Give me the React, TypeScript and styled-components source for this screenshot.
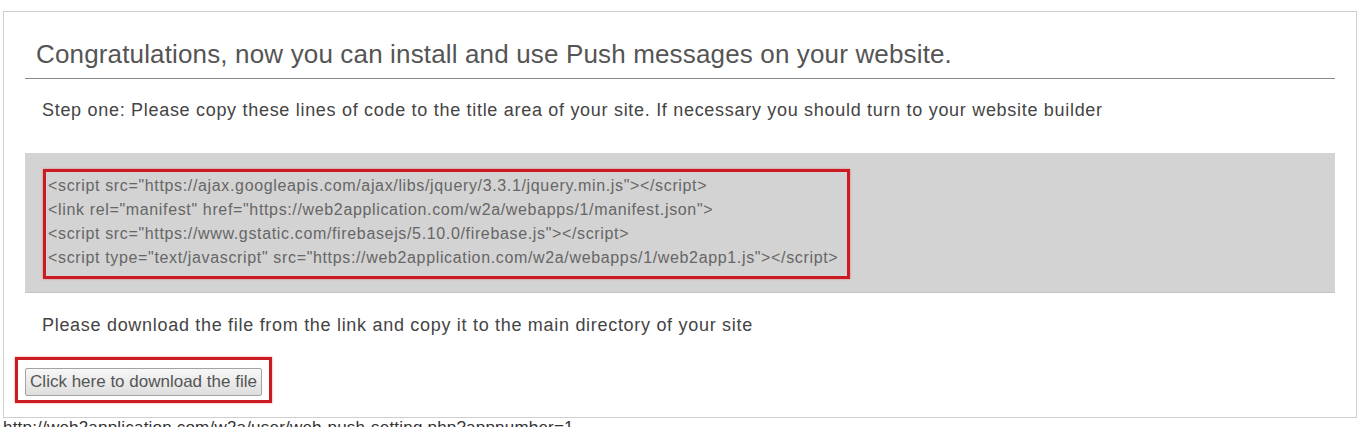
import styled, { createGlobalStyle } from 'styled-components';

const GlobalStyle = createGlobalStyle`
  html, body {
    margin: 0;
    padding: 0;
    background: #fff;
    overflow: hidden;
  }
  body {
    font-family: "Liberation Sans", Arial, sans-serif;
  }
`;

const Page = styled.div`
  padding: 11px 0 0 3px;
  width: 1366px;
  height: 427px;
  box-sizing: border-box;
`;

const Panel = styled.div`
  width: 1354px;
  box-sizing: border-box;
  border: 1px solid #cfcfcf;
  background: #fff;
  padding: 27px 0 14px;
`;

const Header = styled.div`
  margin: 0 21px;
  padding: 0 0 9px 11px;
  border-bottom: 1px solid #8a8a8a;
`;

const Title = styled.h1`
  margin: 0;
  font-size: 26px;
  letter-spacing: 0.15px;
  line-height: 30px;
  font-weight: normal;
  color: #555;
`;

const Note = styled.p<{ $top: number }>`
  margin: ${(p) => p.$top}px 0 0;
  padding-left: 38px;
  font-size: 18px;
  letter-spacing: 0.7px;
  line-height: 20px;
  color: #444;
  white-space: nowrap;
`;

const CodeArea = styled.div`
  margin: 33px 21px 0;
  padding: 16px 18px 13px;
  background: #d3d3d3;
  border-bottom: 1px solid #c4c4c4;
`;

const Highlight = styled.div`
  border: 3px solid #cc1a22;
  box-shadow: 0 0 2px rgba(230, 60, 60, 0.6);
`;

const CodeFrame = styled(Highlight)`
  width: 807px;
  box-sizing: border-box;
  padding: 2px 2px 6px;
`;

const CodeLines = styled.div`
  font-size: 16px;
  letter-spacing: 0.65px;
  line-height: 24px;
  color: #666;
  white-space: nowrap;
`;

const ButtonFrame = styled(Highlight)`
  display: inline-block;
  margin: 22px 0 0 11px;
  padding: 8px 7px 4px;
`;

const DownloadButton = styled.button`
  display: block;
  height: 28px;
  width: 237px;
  padding: 0;
  border: 1px solid #a3a3a3;
  border-radius: 2px;
  background: linear-gradient(#f7f7f7, #dedede);
  font-family: "Liberation Sans", Arial, sans-serif;
  font-size: 17px;
  color: #555;
  cursor: pointer;
`;

const StatusText = styled.div`
  margin-top: 1px;
  font-size: 17px;
  letter-spacing: 0.2px;
  line-height: 18px;
  color: #333;
  white-space: nowrap;
`;

const codeLines = [
  '<script src="https://ajax.googleapis.com/ajax/libs/jquery/3.3.1/jquery.min.js"></script>',
  '<link rel="manifest" href="https://web2application.com/w2a/webapps/1/manifest.json">',
  '<script src="https://www.gstatic.com/firebasejs/5.10.0/firebase.js"></script>',
  '<script type="text/javascript" src="https://web2application.com/w2a/webapps/1/web2app1.js"></script>',
];

export default function App() {
  return (
    <>
      <GlobalStyle />
      <Page>
        <Panel>
          <Header>
            <Title>Congratulations, now you can install and use Push messages on your website.</Title>
          </Header>
          <Note $top={21}>
            Step one: Please copy these lines of code to the title area of your site. If necessary you should turn to your website builder
          </Note>
          <CodeArea>
            <CodeFrame>
              <CodeLines>
                {codeLines.map((line) => (
                  <div key={line}>{line}</div>
                ))}
              </CodeLines>
            </CodeFrame>
          </CodeArea>
          <Note $top={22}>Please download the file from the link and copy it to the main directory of your site</Note>
          <ButtonFrame>
            <DownloadButton>Click here to download the file</DownloadButton>
          </ButtonFrame>
        </Panel>
        <StatusText>http://web2application.com/w2a/user/web-push-setting.php?appnumber=1</StatusText>
      </Page>
    </>
  );
}
